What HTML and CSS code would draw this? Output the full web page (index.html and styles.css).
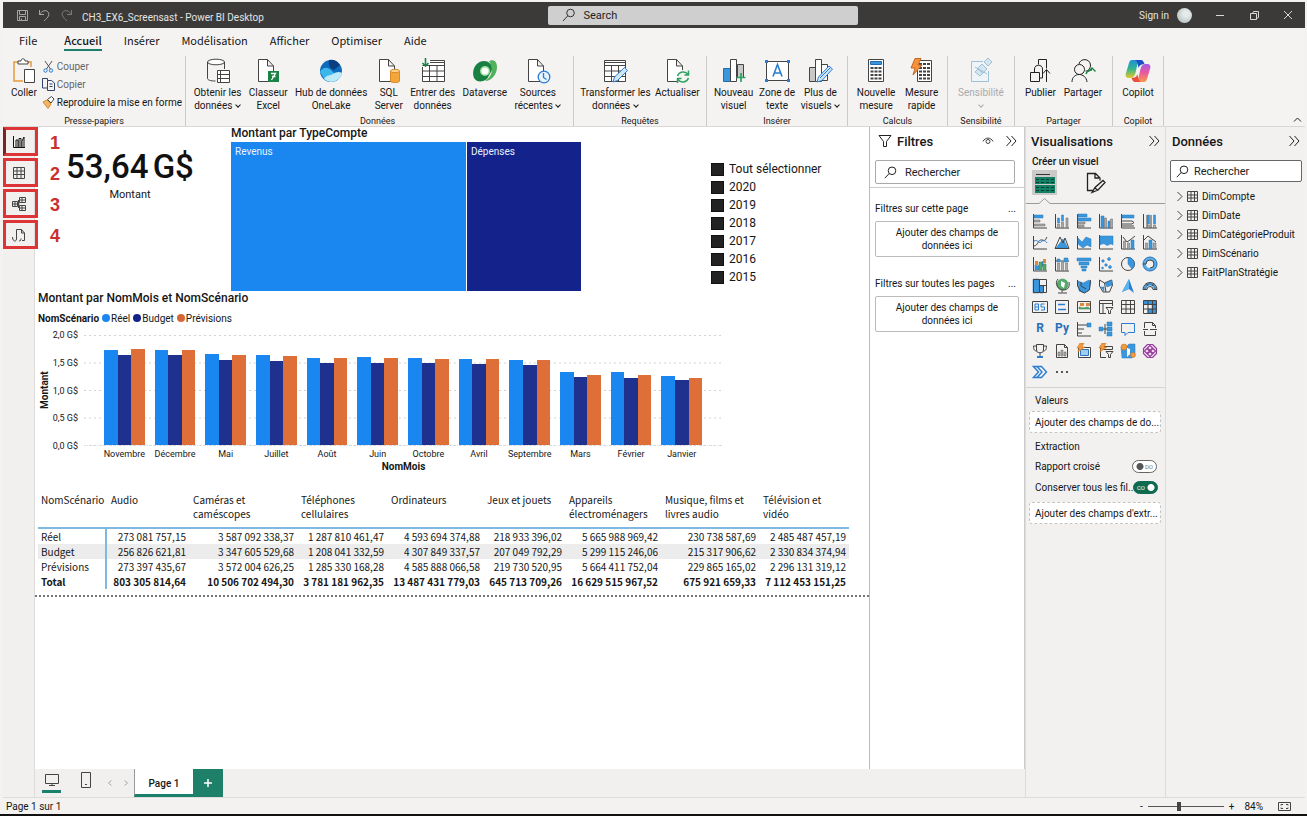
FILE: index.html
```html
<!DOCTYPE html>
<html lang="fr">
<head>
<meta charset="utf-8">
<title>CH3_EX6_Screensast - Power BI Desktop</title>
<link rel="stylesheet" href="styles.css">
</head>
<body>
<div class="app">
<header class="titlebar">
  <div class="title-left">
    <button class="bare" aria-label="Enregistrer"><svg class="ic tl" width="13" height="13" viewBox="0 0 13 13"><path d="M1.500 1.500h10v10h-10zM3.500 1.500v4h6v-4M3.500 11.500v-4h6v4M5.500 9.500v2"/></svg></button>
    <button class="bare" aria-label="Annuler"><svg class="ic tl" width="13" height="13" viewBox="0 0 13 13"><path d="M1.500 1v4.500h4.500M1.500 5.500C4 1.500 8 .5 10 3s.5 5-4 9"/></svg></button>
    <button class="bare redo" aria-label="Rétablir"><svg class="ic tl" width="13" height="13" viewBox="0 0 13 13"><path d="M11.500 1v4.500H7M11.500 5.500C9 1.500 5 .5 3 3s-.5 5 4 9"/></svg></button>
    <span class="doc-name">CH3_EX6_Screensast - Power BI Desktop</span>
  </div>
  <label class="top-search"><svg class="ic dk" width="14" height="14" viewBox="0 0 14 14"><circle cx="8.500" cy="5" r="3.800"/><path d="M5.800 7.800L1 13"/></svg><input type="text" placeholder="Search" aria-label="Search"></label>
  <div class="title-right">
    <button class="bare signin">Sign in</button><span class="avatar"></span>
    <button class="bare win" aria-label="Réduire"><svg class="ic wh" width="12" height="12" viewBox="0 0 12 12"><path d="M2 6.500h8"/></svg></button>
    <button class="bare win" aria-label="Restaurer"><svg class="ic wh" width="12" height="12" viewBox="0 0 12 12"><path d="M2.500 4.500h6v6h-6zM4.500 4.500l1-2h5v6l-2 1"/></svg></button>
    <button class="bare win" aria-label="Fermer"><svg class="ic wh" width="12" height="12" viewBox="0 0 12 12"><path d="M2 2l8 8M10 2l-8 8"/></svg></button>
  </div>
</header>

<nav class="menu">
  <button>File</button><button class="on">Accueil</button><button>Insérer</button><button>Modélisation</button><button>Afficher</button><button>Optimiser</button><button>Aide</button>
</nav>

<section class="ribbon">
  <div class="group g-clip">
    <div class="tools">
      <button class="tool"><svg class="ic" width="24" height="26" viewBox="0 0 24 26"><path stroke="#e39a3b" stroke-width="1.500" d="M8 4H2v19h9M15 4h4v5"/><path fill="#fff" d="M6 6V3h3c0-3 4-3 4 0h3v3z"/><path fill="#fff" d="M12.500 11.500h10v13h-10z"/></svg><span>Coller</span></button>
      <div class="clip-list">
        <button class="mini dim"><svg class="ic" width="13" height="13" viewBox="0 0 13 13"><path stroke="#555" d="M3 1l5.500 8M10 1L4.500 9"/><circle cx="3.500" cy="10.500" r="1.700" stroke="#2b7cd3"/><circle cx="9" cy="10.500" r="1.700" stroke="#2b7cd3"/></svg>Couper</button>
        <button class="mini dim"><svg class="ic" width="13" height="13" viewBox="0 0 13 13"><path stroke="#30436b" d="M5 10H.5V.5h5v2M5.500 2.500h4l3 2.500v7.500h-7z"/><path stroke="#30436b" d="M7.500 6h3M7.500 8.500h3"/></svg>Copier</button>
        <button class="mini"><svg class="ic" width="13" height="13" viewBox="0 0 13 13"><path fill="#f0b566" stroke="#d98a2b" d="M1 6l4-2 4 4-3 4.500z"/><path fill="#fff" d="M5.500 3.500l4-3 2.500 2.500-3 4z"/></svg>Reproduire la mise en forme</button>
      </div>
    </div>
    <div class="group-name">Presse-papiers</div>
  </div>

  <div class="group g-data">
    <div class="tools">
      <button class="tool"><svg class="ic" width="24" height="26" viewBox="0 0 24 26"><ellipse cx="10" cy="4" rx="8.500" ry="2.800" fill="#fff"/><path d="M1.500 4v16.500c0 1.500 3 2.500 8 2.500M18.500 4v7"/><path fill="#fff" d="M11.500 12.500h12v12h-12zM11.500 16.500h12M11.500 20.500h12M14.500 12.500v12"/></svg><span>Obtenir les<br>données <i class="car"></i></span></button>
      <button class="tool"><svg class="ic" width="24" height="26" viewBox="0 0 24 26"><path fill="#fff" d="M2.500 1.500h9l6 6.500v15.500h-15zM11.500 1.500V8h6"/><path fill="#1d8245" stroke="none" d="M12 13h11v11H12z"/><path stroke="#fff" stroke-width="1.300" d="M15 15.500h4.500l-4 6.500M16 18.500h3.500"/></svg><span>Classeur<br>Excel</span></button>
      <button class="tool"><svg width="24" height="26" viewBox="0 0 24 26"><circle cx="12" cy="13" r="11" fill="#0f6cbd"/><path fill="#0a3f82" d="M10 2a11 11 0 0 1 11 5l-6 5C11 11 9 7 10 2z"/><path fill="#3db6ea" d="M1 14c3-6 9-5 12-1s8 3 10 1a11 11 0 0 1-17 8z"/><path fill="#bdeaf8" d="M5 21c3-5 6-3 9-5s6-3 9-1a11 11 0 0 1-18 6z"/></svg><span>Hub de données<br>OneLake</span></button>
      <button class="tool"><svg class="ic" width="24" height="26" viewBox="0 0 24 26"><path fill="#fff" d="M2.500 1.500h9l6 6.500v15.500h-15zM11.500 1.500V8h6"/><path fill="#f3a73b" stroke="#d98a2b" d="M13.500 13v10c0 2 9 2 9 0V13z"/><ellipse cx="18" cy="13" rx="4.500" ry="1.700" fill="#ffd48c" stroke="#d98a2b"/></svg><span>SQL<br>Server</span></button>
      <button class="tool"><svg class="ic" width="26" height="26" viewBox="0 0 26 26"><path fill="#fff" d="M10 2.500h14.500v21h-22V9"/><path d="M2.500 7.500h22M2.500 13h22M2.500 18.500h22M9.500 7.500v16M17 7.500v16M10 4.500h14"/><path stroke="#1d8245" stroke-width="1.600" d="M5.500 0v8M2.500 5l3 3 3-3"/></svg><span>Entrer des<br>données</span></button>
      <button class="tool"><svg width="26" height="26" viewBox="0 0 26 26"><path fill="#1a7f42" d="M2 20C-1 12 4 3 12 3c5 0 9 4 8 9l-5 9c-4 3-10 4-13-1z"/><path fill="#52b15b" d="M17 3c5-2 8 1 8 6 0 8-6 14-12 14 7-4 9-12 4-20z"/><circle cx="13" cy="13" r="5" fill="#9be09a"/><circle cx="13" cy="13" r="3.500" fill="#fff"/></svg><span>Dataverse</span></button>
      <button class="tool"><svg class="ic" width="26" height="26" viewBox="0 0 26 26"><path fill="#fff" d="M3.500 1.500h9l6 6.500v15.500h-15zM12.500 1.500V8h6"/><circle cx="19" cy="19" r="5.800" fill="#e9f4fd" stroke="#2b7cd3" stroke-width="1.300"/><path stroke="#2b7cd3" stroke-width="1.300" d="M18.500 15v4.500l3 2"/></svg><span>Sources<br>récentes <i class="car"></i></span></button>
    </div>
    <div class="group-name">Données</div>
  </div>

  <div class="group g-query">
    <div class="tools">
      <button class="tool"><svg class="ic" width="26" height="26" viewBox="0 0 26 26"><path fill="#fff" d="M2.500 2.500h21v21h-21z"/><path d="M2.500 7.500h21M2.500 13h21M2.500 18.500h21M9.500 7.500v16M16.500 7.500v16M2.500 4.500h21"/><path fill="#cfe6f8" stroke="#2b7cd3" d="M11 24l1.500-5L22.500 9.500l3 3L15.500 22.500z"/></svg><span>Transformer les<br>données <i class="car"></i></span></button>
      <button class="tool"><svg class="ic" width="26" height="26" viewBox="0 0 26 26"><path fill="#fff" d="M13 23.500H3.500v-22h9l6 6.500v4M12.500 1.500V8h6"/><g stroke="#2da160" stroke-width="1.500"><path d="M13.500 18a6 6 0 0 1 10.500-1.500M24.500 12.500v4.500h-4M24.500 20a6 6 0 0 1-10.500 1.500M13.500 25v-4.500h4"/></g></svg><span>Actualiser</span></button>
    </div>
    <div class="group-name">Requêtes</div>
  </div>

  <div class="group g-insert">
    <div class="tools">
      <button class="tool"><svg class="ic" width="26" height="26" viewBox="0 0 26 26"><path fill="#3a96dd" stroke="#1f6cb0" d="M2.500 10.500h7v13h-7z"/><path fill="#fff" d="M9.500 1.500h6v22h-6z"/><path fill="#c8c8c8" d="M16.500 6.500h6v13h-6z"/><path stroke="#2da160" stroke-width="1.700" d="M20 15v9M15.500 19.500h9"/></svg><span>Nouveau<br>visuel</span></button>
      <button class="tool"><svg class="ic" width="26" height="26" viewBox="0 0 26 26"><path fill="#fff" d="M2.500 3.500h22v19h-22z"/><path stroke="#2b7cd3" stroke-width="1.600" d="M9 18.500l4.500-12 4.500 12M10.500 15h6"/><path fill="#2b7cd3" stroke="none" d="M1 2h3v3H1zM23 2h3v3h-3zM1 21h3v3H1zM23 21h3v3h-3z"/></svg><span>Zone de<br>texte</span></button>
      <button class="tool"><svg class="ic" width="26" height="26" viewBox="0 0 26 26"><path fill="#c8c8c8" d="M2.500 9.500h6v14h-6z"/><path fill="#fff" d="M8.500 1.500h6v22h-6zM14.500 6.500h6v16h-6z"/><path fill="#cfe6f8" stroke="#2b7cd3" d="M10 24l1.500-5L22 8l3.500 3L15 22.500zM13 20l10-10"/></svg><span>Plus de<br>visuels <i class="car"></i></span></button>
    </div>
    <div class="group-name">Insérer</div>
  </div>

  <div class="group g-calc">
    <div class="tools">
      <button class="tool"><svg class="ic" width="20" height="26" viewBox="0 0 20 26"><path fill="#fff" d="M2.500 1.500h15v22h-15z"/><path fill="#3a96dd" stroke="#1f6cb0" d="M4.500 3.500h11v3h-11z"/><path stroke-width="2" stroke-dasharray="3 1" d="M4.500 10h11M4.500 13.500h11M4.500 17h11M4.500 20.500h11"/></svg><span>Nouvelle<br>mesure</span></button>
      <button class="tool"><svg class="ic" width="24" height="26" viewBox="0 0 24 26"><path fill="#fff" d="M7.500 2.500h14v21h-14z"/><path stroke-width="2" stroke-dasharray="3 1" d="M9 6h11M9 10h11M9 13.500h11M9 17h11M9 20.500h11"/><path fill="#f5923e" stroke="#c9651b" d="M5 .5h6L8 7h4L3 17l2-7H1z"/></svg><span>Mesure<br>rapide</span></button>
    </div>
    <div class="group-name">Calculs</div>
  </div>

  <div class="group g-sens">
    <div class="tools">
      <button class="tool off" disabled><svg class="ic" width="24" height="26" viewBox="0 0 24 26"><g stroke="#9fc0d6"><path fill="#eef4f8" d="M14 3.500H2.500v20h17V13"/><path fill="#d4e5f0" d="M6 14l3-3 5 4-3 3zM9 10l4-4 5 5-4 4zM15 4l4-4 4 4-4 4z"/><path d="M6 9l12 7"/></g></svg><span>Sensibilité<br><i class="car"></i></span></button>
    </div>
    <div class="group-name">Sensibilité</div>
  </div>

  <div class="group g-share">
    <div class="tools">
      <button class="tool"><svg class="ic bk" width="24" height="26" viewBox="0 0 24 26"><path d="M2.500 14.500h9v9h-9zM6.500 14v-3c0-5 8-5 8 0v9h-3M10.500 6.500v-5h8v9M18.500 24v-12M15 15.500l3.500-4 3.500 4"/></svg><span>Publier</span></button>
      <button class="tool"><svg class="ic bk" width="26" height="26" viewBox="0 0 26 26"><circle cx="9.500" cy="11.500" r="5"/><path d="M2 24c0-10 14-10 15 0M9 6c1-6 11-6 11.500 1 0 3-2 6-5 6"/><path stroke="#1d8245" stroke-width="1.400" d="M16 16c1-3 3-4 6-4M18.500 13.500l3.500-3.500 3.500 3.500"/></svg><span>Partager</span></button>
    </div>
    <div class="group-name">Partager</div>
  </div>

  <div class="group g-cop">
    <div class="tools">
      <button class="tool"><svg width="26" height="26" viewBox="0 0 26 26"><defs><linearGradient id="ca" x1="0" y1="0" x2="0" y2="1"><stop offset="0" stop-color="#1e90dc"/><stop offset=".5" stop-color="#35b68b"/><stop offset="1" stop-color="#e8c62c"/></linearGradient><linearGradient id="cb" x1="0" y1="0" x2="0" y2="1"><stop offset="0" stop-color="#a65be6"/><stop offset=".5" stop-color="#ec5a9c"/><stop offset="1" stop-color="#f59a4a"/></linearGradient></defs><path fill="url(#ca)" d="M7 2h9c-3 1-4 6-5 11-1 4-2 7-5 7H4c-3 0-4-2-3-5L4 5c.6-2 1.400-3 3-3z"/><path fill="url(#cb)" d="M19 24h-9c3-1 4-6 5-11 1-4 2-7 5-7h2c3 0 4 2 3 5l-3 10c-.6 2-1.400 3-3 3z"/><path fill="#1d4fc4" d="M10 2h6c2 0 2.500 2 3.500 4-3 0-5 1-6 4C13 7 13 4 10 2z"/><path fill="#e94f3c" d="M16 24h-6c-2 0-2.500-2-3.500-4 3 0 5-1 6-4 .5 3 .5 6 3.500 8z"/></svg><span>Copilot</span></button>
    </div>
    <div class="group-name">Copilot</div>
  </div>
  <button class="bare collapse" aria-label="Réduire le ruban"><svg class="ic bk" width="9" height="7" viewBox="0 0 9 7"><path d="M1 5.500L4.500 2 8 5.500"/></svg></button>
</section>

<div class="body">
  <aside class="rail">
    <button class="current" aria-label="Vue rapport"><svg class="ic" width="14" height="14" viewBox="0 0 14 14"><path d="M1.500 1v11.500H13M4 12V5h2v7M7 12V3.500h2V12M10 12V6l2-4v10"/></svg><b>1</b></button>
    <button aria-label="Vue table"><svg class="ic" width="14" height="14" viewBox="0 0 14 14"><path d="M1.500 1.500h11v11h-11zM1.500 5h11M1.500 8.500h11M5 1.500v11M9 1.500v11"/></svg><b>2</b></button>
    <button aria-label="Vue modèle"><svg class="ic" width="16" height="14" viewBox="0 0 16 14"><path d="M1.500 4.500h5v5h-5zM1.500 7h5M4 4.500v5M8.500 .5h6v5h-6zM8.500 8.500h6v5h-6zM8.500 3h6M8.500 11h6M11 .5v5M11 8.500v5M6.500 7h2M7.500 3v8"/></svg><b>3</b></button>
    <button aria-label="Vue requête DAX"><svg class="ic" width="16" height="14" viewBox="0 0 16 14"><path d="M5.500 9V1.500h5L13.500 5v7.500H11M10.500 1.500V5h3M1.500 9c0 5 4 5 4 2V9M8 12.500c1 1 2 0 2-2"/></svg><b>4</b></button>
  </aside>

  <div class="work">
    <div class="upper">
    <main class="canvas">
      <div class="page">
        <div class="row-top">
          <div class="card"><div class="card-value">53,64&thinsp;G$</div><div class="card-label">Montant</div></div>
          <div class="tree">
            <h2>Montant par TypeCompte</h2>
            <div class="tree-map"><div class="t-rev">Revenus</div><div class="t-dep">Dépenses</div></div>
          </div>
          <div class="slicer">
            <label><input type="checkbox">Tout sélectionner</label>
            <label><input type="checkbox">2020</label>
            <label><input type="checkbox">2019</label>
            <label><input type="checkbox">2018</label>
            <label><input type="checkbox">2017</label>
            <label><input type="checkbox">2016</label>
            <label><input type="checkbox">2015</label>
          </div>
        </div>
        <section class="chart">
          <h2>Montant par NomMois et NomScénario</h2>
          <div class="legend"><b>NomScénario</b><span class="l1">Réel</span><span class="l2">Budget</span><span class="l3">Prévisions</span></div>
          <div class="plot">
            <div class="y-name">Montant</div>
            <div class="y-axis"><span>2,0 G$</span><span>1,5 G$</span><span>1,0 G$</span><span>0,5 G$</span><span>0,0 G$</span></div>
            <div class="bars">
              <div class="m"><i style="height:86%"></i><i style="height:82%"></i><i style="height:87%"></i><span>Novembre</span></div>
              <div class="m"><i style="height:86%"></i><i style="height:82%"></i><i style="height:86%"></i><span>Décembre</span></div>
              <div class="m"><i style="height:83%"></i><i style="height:77%"></i><i style="height:82%"></i><span>Mai</span></div>
              <div class="m"><i style="height:82%"></i><i style="height:76%"></i><i style="height:81%"></i><span>Juillet</span></div>
              <div class="m"><i style="height:79%"></i><i style="height:75%"></i><i style="height:79%"></i><span>Août</span></div>
              <div class="m"><i style="height:80%"></i><i style="height:75%"></i><i style="height:79%"></i><span>Juin</span></div>
              <div class="m"><i style="height:79%"></i><i style="height:75%"></i><i style="height:78%"></i><span>Octobre</span></div>
              <div class="m"><i style="height:78%"></i><i style="height:74%"></i><i style="height:78%"></i><span>Avril</span></div>
              <div class="m"><i style="height:77%"></i><i style="height:73%"></i><i style="height:77%"></i><span>Septembre</span></div>
              <div class="m"><i style="height:66%"></i><i style="height:62%"></i><i style="height:64%"></i><span>Mars</span></div>
              <div class="m"><i style="height:66%"></i><i style="height:61%"></i><i style="height:64%"></i><span>Février</span></div>
              <div class="m"><i style="height:63%"></i><i style="height:59%"></i><i style="height:61%"></i><span>Janvier</span></div>
            </div>
          </div>
          <div class="x-name">NomMois</div>
        </section>
        <table class="matrix">
          <colgroup><col class="c0"><col class="c1"><col class="c2"><col class="c3"><col class="c4"><col class="c1"><col class="c4"><col class="c5"><col class="c3"></colgroup>
          <thead><tr><th>NomScénario</th><th>Audio</th><th>Caméras et<br>caméscopes</th><th>Téléphones<br>cellulaires</th><th>Ordinateurs</th><th>Jeux et jouets</th><th>Appareils<br>électroménagers</th><th>Musique, films et<br>livres audio</th><th>Télévision et<br>vidéo</th></tr></thead>
          <tbody>
            <tr><th>Réel</th><td>273 081 757,15</td><td>3 587 092 338,37</td><td>1 287 810 461,47</td><td>4 593 694 374,88</td><td>218 933 396,02</td><td>5 665 988 969,42</td><td>230 738 587,69</td><td>2 485 487 457,19</td></tr>
            <tr class="alt"><th>Budget</th><td>256 826 621,81</td><td>3 347 605 529,68</td><td>1 208 041 332,59</td><td>4 307 849 337,57</td><td>207 049 792,29</td><td>5 299 115 246,06</td><td>215 317 906,62</td><td>2 330 834 374,94</td></tr>
            <tr><th>Prévisions</th><td>273 397 435,67</td><td>3 572 004 626,25</td><td>1 285 330 168,28</td><td>4 585 888 066,58</td><td>219 730 520,95</td><td>5 664 411 752,04</td><td>229 865 165,02</td><td>2 296 131 319,12</td></tr>
            <tr class="total"><th>Total</th><td>803 305 814,64</td><td>10 506 702 494,30</td><td>3 781 181 962,35</td><td>13 487 431 779,03</td><td>645 713 709,26</td><td>16 629 515 967,52</td><td>675 921 659,33</td><td>7 112 453 151,25</td></tr>
          </tbody>
        </table>
      </div>
    </main>

    <aside class="filters">
      <div class="pane-head"><svg class="ic bk" width="14" height="14" viewBox="0 0 14 14"><path d="M1 1.500h12L8.500 7.500v5h-3v-5z"/></svg><h3>Filtres</h3><button class="bare" aria-label="Afficher"><svg class="ic" width="12" height="12" viewBox="0 0 12 12"><path d="M1 6.500c2-4.500 8-4.500 10 0"/><circle cx="6" cy="6.500" r="2"/></svg></button><button class="bare" aria-label="Réduire Filtres"><svg class="ic bk" width="12" height="12" viewBox="0 0 12 12"><path d="M1.500 1L6 6l-4.500 5M6.500 1L11 6l-4.500 5"/></svg></button></div>
      <label class="search"><svg class="ic bk" width="13" height="13" viewBox="0 0 13 13"><circle cx="8" cy="4.800" r="3.800"/><path d="M5.200 7.500L.8 12.200"/></svg><input type="text" placeholder="Rechercher" aria-label="Rechercher"></label>
      <div class="filter-body">
        <div class="f-head"><span>Filtres sur cette page</span><button class="bare">...</button></div>
        <button class="drop">Ajouter des champs de<br>données ici</button>
        <div class="f-head"><span>Filtres sur toutes les pages</span><button class="bare">...</button></div>
        <button class="drop">Ajouter des champs de<br>données ici</button>
      </div>
    </aside>
    </div>

    <footer class="pages">
      <button class="bare view on" aria-label="Disposition bureau"><svg class="ic" width="16" height="14" viewBox="0 0 16 14"><path d="M1.500 1.500h13v9h-13zM8 10.500v2M5 12.500h6"/></svg></button>
      <button class="bare view ph" aria-label="Disposition mobile"><svg class="ic" width="12" height="18" viewBox="0 0 12 18"><path d="M1.500 1.500h9v15h-9zM5 13.500h2"/></svg></button>
      <button class="bare arrow" aria-label="Page précédente"><svg class="ic lt" width="6" height="8" viewBox="0 0 6 8"><path d="M4.500 1.500L1.500 4l3 2.500"/></svg></button>
      <button class="bare arrow" aria-label="Page suivante"><svg class="ic lt" width="6" height="8" viewBox="0 0 6 8"><path d="M1.500 1.500l3 2.500-3 2.500"/></svg></button>
      <button class="page-tab">Page 1</button><button class="add" aria-label="Nouvelle page"><svg class="ic" width="10" height="10" viewBox="0 0 10 10"><path stroke="#fff" stroke-width="1.500" d="M5 1v8M1 5h8"/></svg></button>
    </footer>
  </div>

  <aside class="visuals">
    <div class="pane-head"><h3>Visualisations</h3><button class="bare" aria-label="Réduire Visualisations"><svg class="ic bk" width="12" height="12" viewBox="0 0 12 12"><path d="M1.500 1L6 6l-4.500 5M6.500 1L11 6l-4.500 5"/></svg></button></div>
    <div class="sub">Créer un visuel</div>
    <div class="modes">
      <button class="mode on" aria-label="Créer"><svg width="20" height="20" viewBox="0 0 20 20"><path fill="#333" d="M1 1h14v1H1z"/><path fill="#148063" d="M0 4h20v7H0zM0 12h20v8H0z"/><path stroke="#0b3f33" stroke-dasharray="3 2" d="M1 6.500h18M1 9.500h18M1 14.500h18M1 17.500h18"/></svg></button>
      <button class="mode" aria-label="Mettre en forme"><svg class="ic bk" width="20" height="22" viewBox="0 0 20 22"><path stroke-width="1.300" d="M14 8.500V6l-4.500-4.500H1.500v17h6M9 1.500V6h4M6 20.500l3-5 8-7 2 2-7 7.500zM9 16l3 2.500"/></svg></button>
    </div>
    <svg class="ic notch" width="139" height="8" viewBox="0 0 139 8"><path stroke="#9a9a9a" d="M0 6.500h13l5.500-5 5.500 5h115"/></svg>
    <div class="gallery">
      <button aria-label="Barres empilées"><svg class="ic" viewBox="0 0 16 16"><path d="M1.500 1v14H15"/><path class="b" d="M2 2h9v3H2z"/><path class="g" d="M2 7h6v2H2zM2 11h11v2H2z"/></svg></button>
      <button aria-label="Histogramme empilé"><svg class="ic" viewBox="0 0 16 16"><path d="M1.500 1v14H15"/><path class="b" d="M3.500 5h2v5h-2zM7.500 2h2v6h-2z"/><path class="g" d="M3.500 11h2v4h-2zM7.500 9h2v6h-2zM12 5h2v10h-2z"/></svg></button>
      <button aria-label="Barres groupées"><svg class="ic" viewBox="0 0 16 16"><path d="M1.500 1v14H15"/><path class="b" d="M2 1h9v3H2zM2 5h13v3H2z"/><path class="g" d="M2 9h7v2H2zM2 12h6v2H2z"/></svg></button>
      <button aria-label="Histogramme groupé"><svg class="ic" viewBox="0 0 16 16"><path d="M1.500 1v14H15"/><path class="b" d="M3 3h3v12H3zM10 8h2v7h-2z"/><path class="g" d="M6.500 5h2v10h-2zM12.500 6h2v9h-2z"/></svg></button>
      <button aria-label="Barres 100 %"><svg class="ic" viewBox="0 0 16 16"><path d="M1.500 1v14H15"/><path class="b" d="M2 2h12v3H2z"/><path d="M2 8h10l2 1.500L12 11H2M2 13h12"/></svg></button>
      <button aria-label="Histogramme 100 %"><svg class="ic" viewBox="0 0 16 16"><path d="M1.500 1v14H15M5 2v13M9 2v13"/><path class="b" d="M5.500 2h2v9h-2zM11.500 2h2v9h-2z"/><path class="g" d="M5.500 12h2v3h-2zM11.500 12h2v3h-2z"/></svg></button>

      <button aria-label="Courbes"><svg class="ic" viewBox="0 0 16 16"><path d="M1.500 2v13H15M2 12c4 0 4-7 8-6s3 0 5-3"/><path class="bl" d="M2 7c4-2 5 3 7 1s4-2 6 1"/></svg></button>
      <button aria-label="Aires"><svg class="ic" viewBox="0 0 16 16"><path class="b" d="M2 14l7-9 5 9z"/><path d="M1 14.500L6 3l3 6 2-5 4 10.500z"/></svg></button>
      <button aria-label="Aires empilées"><svg class="ic" viewBox="0 0 16 16"><path d="M1.500 2v13H15"/><path class="b" d="M2 4l4 4 4-5 5 2v8l-4-2-4 3-5-4z"/></svg></button>
      <button aria-label="Aires 100 %"><svg class="ic" viewBox="0 0 16 16"><path d="M1.500 1v14H15"/><path class="b" d="M2 2h13v9c-3-3-5 2-7 0s-4-1-6 0z"/></svg></button>
      <button aria-label="Courbe et histogramme empilé"><svg class="ic" viewBox="0 0 16 16"><path d="M1.500 1v14H15M3 3l4 5 3-2 5-4"/><path class="g" d="M3.500 7h2v8h-2zM7.500 9h2v6h-2z"/><path class="b" d="M11 6h3v9h-3z"/></svg></button>
      <button aria-label="Courbe et histogramme groupé"><svg class="ic" viewBox="0 0 16 16"><path d="M1.500 1v14H15M2 6l4-4 4 3 4 3"/><path class="g" d="M3.500 9h2v6h-2zM11 9h3v6h-3z"/><path class="b" d="M7 6h3v9H7z"/></svg></button>

      <button aria-label="Ruban"><svg class="ic" viewBox="0 0 16 16"><path d="M1.500 1v14H15"/><path fill="#e2883d" stroke="none" d="M3 5h3v4H3zM11 3h3v4h-3z"/><path class="b" d="M3 9l3 1 5-5v5l-5 4H3z"/><path class="gr" d="M7 6h3v8H7zM11 8h3v6h-3z"/></svg></button>
      <button aria-label="Cascade"><svg class="ic" viewBox="0 0 16 16"><path d="M1.500 1v14H15M2 5h13"/><path class="b" d="M3 3h3v3H3zM10 2h4v4h-4z"/><path class="g" d="M3.500 7h2v8h-2zM7.500 6h2v9h-2zM11.500 7h2v8h-2z"/></svg></button>
      <button aria-label="Entonnoir"><svg class="ic" viewBox="0 0 16 16"><path class="b" d="M1 2h14v3H1zM3 6h10v3H3zM5 10h6v2H5zM6 13h4v2H6z"/></svg></button>
      <button aria-label="Nuage de points"><svg class="ic" viewBox="0 0 16 16"><path d="M1.500 1v14H15"/><g class="b"><circle cx="5" cy="5" r="1.300"/><circle cx="11" cy="3" r="1.500"/><circle cx="8" cy="9" r="1.300"/><circle cx="12" cy="11" r="1.500"/><circle cx="4.500" cy="12" r="1"/></g></svg></button>
      <button aria-label="Secteurs"><svg class="ic" viewBox="0 0 16 16"><circle cx="8" cy="8" r="6.500"/><path class="b" d="M8 1.500A6.500 6.500 0 0 1 12 13L8 8z"/></svg></button>
      <button aria-label="Anneau"><svg class="ic" viewBox="0 0 16 16"><circle cx="8" cy="8" r="5.500" stroke="#58aeea" stroke-width="3"/><circle cx="8" cy="8" r="7" stroke="#2b6fb8"/><path d="M1 8h3a4 4 0 0 1 8 0 4 4 0 0 1-4 4"/></svg></button>

      <button aria-label="Treemap"><svg class="ic" viewBox="0 0 16 16"><path class="b" d="M1 1h6v14H1zM8 8h3v7H8z"/><path d="M1.500 1.500h13v13h-13zM7.500 1.500v13M7.500 7.500h7M11.500 7.500v7"/></svg></button>
      <button aria-label="Carte"><svg class="ic" viewBox="0 0 16 16"><circle cx="8.500" cy="6.500" r="5.500" class="gr"/><path fill="#fff" stroke="none" d="M7 3l4 2-1 5-3-2z"/><path d="M4 1c-4 4 0 11 5 11s7-3 6-8M8 12.500v2M4 15h9"/></svg></button>
      <button aria-label="Carte choroplèthe"><svg class="ic" viewBox="0 0 16 16"><path class="b" d="M2 3l5 2 6-3 2 2-2 8-5 3-5-2z"/><path d="M1.500 2v6l3 5 4 2 5-3 1-10M5 4v4l5 3"/></svg></button>
      <button aria-label="Carte de formes"><svg class="ic" viewBox="0 0 16 16"><path d="M1.500 2l5 3 7-3 1 5-3 7H5L1.500 8zM6.500 5L8 14"/><path class="b" d="M7 5l7-3v5l-5 2zM3 9h3v4z"/></svg></button>
      <button aria-label="Azure Maps"><svg class="ic" viewBox="0 0 16 16"><path fill="#2b7cd3" stroke="none" d="M9 1l5 14-5-4-7 3z"/><path fill="#58b4ed" stroke="none" d="M9 1v10l-7 3z"/></svg></button>
      <button aria-label="Jauge"><svg class="ic" viewBox="0 0 16 16"><path class="b" d="M2 11a6 6 0 0 1 12 0h-2a4 4 0 0 0-8 0z"/><path d="M1 11.500a7 7 0 0 1 14 0h-4a3 3 0 0 0-6 0zM4 5l2 3M12 5l-2 3"/></svg></button>

      <button aria-label="Carte de valeur"><svg class="ic" viewBox="0 0 16 16"><path d="M.5 2.500h15v11H.5z"/><path class="bl" d="M3 5v6h3.500V5H3M3 8h3.500M12.500 5H9v3h3.500v3H9"/></svg></button>
      <button aria-label="Carte multiligne"><svg class="ic" viewBox="0 0 16 16"><path d="M1.500 1.500h13v13h-13z"/><path class="bl" stroke-width="1.600" d="M4 5.500h7M4 10.500h8"/></svg></button>
      <button aria-label="KPI"><svg class="ic" viewBox="0 0 16 16"><path d="M1.500 2.500h13v11h-13z"/><path fill="#e2883d" stroke="none" d="M4 4h4v3H4zM10 4h4v3h-4z"/><path class="gr" d="M3 8l4 1 5-1 2 2H3z"/></svg></button>
      <button aria-label="Segment"><svg class="ic" viewBox="0 0 16 16"><path d="M8 14.500H1.500v-13h13V7M1.500 4.500h13M5 4.500v10M8 8.500h7l-2.500 3v3h-2v-3z"/></svg></button>
      <button aria-label="Table"><svg class="ic" viewBox="0 0 16 16"><path d="M1.500 1.500h13v13h-13zM1.500 5.500h13M1.500 10h13M6 1.500v13M10.500 1.500v13"/></svg></button>
      <button aria-label="Matrice"><svg class="ic" viewBox="0 0 16 16"><path class="b" d="M6 10h4v4H6zM10 6h4v8h-4zM2 2h12v3H2z"/><path d="M1.500 1.500h13v13h-13zM1.500 5.500h13M1.500 10h13M6 1.500v13M10.500 1.500v13"/></svg></button>

      <button class="letters">R</button>
      <button class="letters">Py</button>
      <button aria-label="Influenceurs clés"><svg class="ic" viewBox="0 0 16 16"><path d="M1.500 1v14H15M2 4h9M2 8h6M2 12h4"/><path class="b" d="M11 2h4v4h-4z"/></svg></button>
      <button aria-label="Arborescence hiérarchique"><svg class="ic" viewBox="0 0 16 16"><path class="b" d="M1 6h4v4H1zM9 1h5v4H9zM9 6h5v4H9zM9 11h5v4H9z"/><path d="M5 8h4M7 3v10"/></svg></button>
      <button aria-label="Questions et réponses"><svg class="ic" viewBox="0 0 16 16"><path class="bl" d="M1.500 2.500h13v9H8l-3 3v-3H1.500z"/></svg></button>
      <button aria-label="Récit"><svg class="ic" viewBox="0 0 16 16"><path d="M2.500 7V1.500h8l3 3V7M2.500 10v4.500h11V10M10.500 1.500v3h3M1 8.500h5M8 8.500h7"/></svg></button>

      <button aria-label="Métriques"><svg class="ic" viewBox="0 0 16 16"><path d="M4.500 1.500h7v6c0 3-7 3-7 0zM4.500 3h-3c0 4 1 5 4 5M11.500 3h3c0 4-1 5-4 5M8 10v3"/><path class="bl" stroke-width="2" d="M5 14h6"/></svg></button>
      <button aria-label="Rapport paginé"><svg class="ic" viewBox="0 0 16 16"><path d="M2.500 1.500h8l3 3v10h-11zM10.500 1.500v3h3"/><path class="g" d="M4 9h2v4H4zM7 7h2v6H7zM10 9h2v4h-2z"/></svg></button>
      <button aria-label="Carte nouvelle"><svg class="ic" viewBox="0 0 16 16"><path fill="#fff" d="M2.500 4.500h12v10h-12z"/><path fill="#9fcdf0" stroke="#2b78bd" d="M4.500 6.500h8v6h-8z"/><path class="o" d="M4 0h4L6 4h3L2 9l1-4H1z"/></svg></button>
      <button aria-label="Segment nouveau"><svg class="ic" viewBox="0 0 16 16"><path d="M2.500 3.500h12v3h-12zM2.500 6.500v8H8M8 8.500h7l-2.500 3v3h-2v-3z"/><path class="o" d="M4 0h4L6 4h3L2 9l1-4H1z"/></svg></button>
      <button aria-label="ArcGIS"><svg class="ic" viewBox="0 0 16 16"><path class="b" d="M1 4h5l3-3h6v9l-3 5H2z"/><path fill="#fff" stroke="none" d="M7 5l3 1v5l-3 3z"/><circle class="o" cx="4" cy="4" r="3"/><circle class="o" cx="13" cy="12" r="2.500"/></svg></button>
      <button aria-label="Power Apps"><svg class="ic" viewBox="0 0 16 16"><g fill="#f4e6f5" stroke="#96409c" stroke-width="1.200" stroke-linejoin="round"><path d="M5.500 1.500h5L14.500 5.500v5l-4 4h-5l-4-4v-5z"/><path d="M8 2.500l2.500 2.500L8 7.500 5.500 5zM8 8.500l2.500 2.500L8 13.500 5.500 11zM5 5.500L7.500 8 5 10.500 2.500 8zM11 5.500L13.500 8 11 10.500 8.500 8z"/></g></svg></button>

      <button aria-label="Power Automate"><svg class="ic" viewBox="0 0 16 16"><path class="bl" stroke-width="1.400" d="M1.500 2.500h8L14.500 8l-5 5.500h-8l5-5.500zM5 2.500L10 8l-5 5.500"/></svg></button>
      <button aria-label="Plus de visuels"><svg class="ic" viewBox="0 0 16 16"><g fill="#222" stroke="none"><circle cx="3" cy="8" r="1"/><circle cx="8" cy="8" r="1"/><circle cx="13" cy="8" r="1"/></g></svg></button>
    </div>
    <div class="wells">
      <div class="w-label">Valeurs</div>
      <button class="well">Ajouter des champs de do...</button>
      <div class="w-label">Extraction</div>
      <div class="toggles">
        <label class="toggle"><span class="t-name">Rapport croisé</span><input type="checkbox"><span class="t-state">DO</span></label>
        <label class="toggle"><span class="t-name">Conserver tous les fil..</span><input type="checkbox" checked><span class="t-state">CO</span></label>
      </div>
      <button class="well">Ajouter des champs d'extr...</button>
    </div>
  </aside>

  <aside class="data">
    <div class="pane-head"><h3>Données</h3><button class="bare" aria-label="Réduire Données"><svg class="ic bk" width="12" height="12" viewBox="0 0 12 12"><path d="M1.500 1L6 6l-4.500 5M6.500 1L11 6l-4.500 5"/></svg></button></div>
    <label class="search"><svg class="ic bk" width="13" height="13" viewBox="0 0 13 13"><circle cx="8" cy="4.800" r="3.800"/><path d="M5.200 7.500L.8 12.200"/></svg><input type="text" placeholder="Rechercher" aria-label="Rechercher"></label>
    <ul class="tables">
      <li><svg class="ic" width="22" height="11" viewBox="0 0 22 11"><path d="M1.500 1L6 5.500 1.500 10M11.500.5h10v10h-10zM11.500 4h10M11.500 7h10M15 .5v10M18.500.5v10"/></svg>DimCompte</li>
      <li><svg class="ic" width="22" height="11" viewBox="0 0 22 11"><path d="M1.500 1L6 5.500 1.500 10M11.500.5h10v10h-10zM11.500 4h10M11.500 7h10M15 .5v10M18.500.5v10"/></svg>DimDate</li>
      <li><svg class="ic" width="22" height="11" viewBox="0 0 22 11"><path d="M1.500 1L6 5.500 1.500 10M11.500.5h10v10h-10zM11.500 4h10M11.500 7h10M15 .5v10M18.500.5v10"/></svg>DimCatégorieProduit</li>
      <li><svg class="ic" width="22" height="11" viewBox="0 0 22 11"><path d="M1.500 1L6 5.500 1.500 10M11.500.5h10v10h-10zM11.500 4h10M11.500 7h10M15 .5v10M18.500.5v10"/></svg>DimScénario</li>
      <li><svg class="ic" width="22" height="11" viewBox="0 0 22 11"><path d="M1.500 1L6 5.500 1.500 10M11.500.5h10v10h-10zM11.500 4h10M11.500 7h10M15 .5v10M18.500.5v10"/></svg>FaitPlanStratégie</li>
    </ul>
  </aside>
</div>

<div class="status">
  <span>Page 1 sur 1</span>
  <div class="zoom"><button class="bare">-</button><input type="range" min="0" max="100" value="40" aria-label="Zoom"><button class="bare">+</button><span>84%</span><button class="bare fit" aria-label="Ajuster à la page"><svg class="ic" width="13" height="11" viewBox="0 0 13 11"><path d="M.5 1.500h12v8H.5zM3 4.500V3.500h2M8 3.500h2v1M3 6.500v1h2M8 7.500h2v-1"/></svg></button></div>
</div>
</div>
</body>
</html>
```
FILE: styles.css
```css
* { box-sizing: border-box; }
body { margin: 0; background: #fff; color: #161616; font-family: Roboto, sans-serif; font-size: 10px; line-height: 13px; }
button, input { font: inherit; color: inherit; }
button { margin: 0; padding: 0; border: 0; background: none; display: inline-flex; align-items: center; justify-content: center; white-space: nowrap; }
h2, h3 { margin: 0; }
svg { display: block; flex: none; }
.ic { fill: none; stroke: #444; stroke-width: 1; }
.ic.bk { stroke: #222; }
.ic.dk { stroke: #333; }
.ic.tl { stroke: #a5a5a3; }
.redo { opacity: .6; }
.ic.wh { stroke: #d8d8d8; }
.ic.lt { stroke: #a8a8a8; }
.b { fill: #3a96dd; stroke: #2b78bd; stroke-width: .5; }
.bl { stroke: #2b7cd3; }
.g { fill: #a9a9a9; stroke: #666; stroke-width: .5; }
.gr { fill: #55ab6a; stroke: #2f7a45; stroke-width: .5; }
.o { fill: #f0993f; stroke: #c76f1c; stroke-width: .5; }

.app { display: flex; flex-direction: column; min-height: 100vh; padding: 2px 2px 0 3px; border-bottom: 2px solid #111; background: #f3f2f1; }

.titlebar { display: flex; align-items: center; height: 26px; background: #3b3a38; color: #e4e4e4; }
.title-left { flex: 55 1 0; display: flex; align-items: center; gap: 9px; padding-left: 13px; }
.doc-name { padding-top: 4px; }
.top-search { flex: 0 1 310px; height: 19px; display: flex; align-items: center; gap: 7px; padding-left: 14px; background: #cfcfcf; border-radius: 2px; color: #222; font-size: 11px; }
.top-search input { flex: 1; min-width: 0; border: 0; padding: 0; background: none; outline: 0; }
input::placeholder { color: #222; opacity: 1; }
.title-right { flex: 45 1 0; display: flex; align-items: center; justify-content: flex-end; padding-right: 11px; }
.avatar { width: 15px; height: 15px; margin: 0 22px 0 8px; border-radius: 50%; background: radial-gradient(circle at 60% 40%, #e6ebea 20%, #b4c0bf 80%); }
.win { margin-left: 22px; }
.avatar + .win { margin-left: 0; }

.menu { display: flex; gap: 22px; padding: 0 16px; height: 25px; background: #f4f3f2; font-family: "Noto Sans CJK SC", Roboto, sans-serif; font-size: 11px; }
.menu button { border-bottom: 2px solid transparent; height: 23px; padding-top: 3px; }
.menu .on { font-weight: 500; margin-left: 5px; border-color: #1a7f6b; }

.ribbon { display: flex; height: 74px; padding-top: 3px; background: #f4f3f2; border-bottom: 1px solid #d9d8d6; }
.group { flex: none; display: flex; flex-direction: column; justify-content: space-between; border-right: 1px solid #cbcac8; height: 70px; }
.g-clip { width: 183px; }
.g-data { width: 388px; padding: 0 8px 0 4px; }
.g-query { width: 133px; padding: 0 4px; }
.g-insert { width: 141px; padding: 0 4px; }
.g-calc { width: 100px; padding: 0 4px; }
.g-sens { width: 67px; }
.g-share { width: 98px; padding: 0 6px; }
.g-cop { width: 51px; }
.tools { display: flex; justify-content: space-around; align-items: flex-start; }
.g-clip .tools { justify-content: flex-start; padding-left: 8px; gap: 5px; }
.tool { flex-direction: column; padding-top: 2px; gap: 2px; }
.tool span { text-align: center; }
.off { color: #aaa; }
.car { display: inline-block; width: 4px; height: 4px; margin: 0 1px 2px 1px; border: solid currentColor; border-width: 0 1px 1px 0; rotate: 45deg; }
.clip-list { display: flex; flex-direction: column; align-items: flex-start; gap: 5px; padding-top: 4px; }
.mini { gap: 2px; }
.dim { color: #666; }
.group-name { font-size: 9px; line-height: 10px; text-align: center; }
.collapse { margin: auto 3px 3px auto; }

.body { flex: 1; display: flex; min-height: 0; }
.rail { flex: none; width: 32px; background: #f1f0ef; border-right: 1px solid #dddcda; display: flex; flex-direction: column; gap: 2px; }
.rail button { position: relative; z-index: 1; width: 35px; height: 29px; padding-right: 3px; border: 3px solid #dd3438; }
.rail .current { border-left-color: #7c2224; }
.rail .current svg { stroke: #111; }
.rail b { position: absolute; left: 44px; top: 3px; color: #c9302f; font: bold 18px/20px "Liberation Sans", sans-serif; }

.work { flex: 1; min-width: 0; display: flex; flex-direction: column; }
.upper { flex: 1; display: flex; }
.canvas { flex: 1; min-width: 0; background: #fff; }
.page { border-bottom: 2px dotted #777; padding-bottom: 6px; }
.page h2 { font-size: 12px; line-height: 14px; font-weight: 500; }
.row-top { display: flex; height: 164px; }
.card { width: 190px; margin-right: 6px; padding-top: 20px; text-align: center; }
.card-value { font-size: 33px; line-height: 40px; font-weight: 500; color: #111; }
.card-label { font-size: 11px; line-height: 16px; }
.tree { width: 350px; }
.page .tree h2 { line-height: 12px; margin-bottom: 3px; }
.tree-map { display: flex; gap: 1px; height: 149px; color: #e8f1fb; }
.t-rev { width: 235px; background: #1a86f0; padding: 3px 4px; }
.t-dep { flex: 1; background: #14228b; padding: 3px 4px; }
.slicer { margin-left: 130px; padding-top: 33px; font-size: 12px; }
.slicer label { display: flex; align-items: center; gap: 5px; height: 18px; }
.slicer input { appearance: none; margin: 0; width: 13px; height: 13px; background: #222; border: 1px solid #111; }

.chart { padding-left: 3px; height: 184px; }
.legend { display: flex; gap: 3px; margin-top: 7px; }
.legend b { font-weight: 700; }
.legend span::before { content: ""; display: inline-block; width: 8px; height: 8px; margin-right: 1px; border-radius: 50%; background: #1a86f0; }
.legend .l2::before { background: #14228b; }
.legend .l3::before { background: #d2683a; }
.plot { display: flex; height: 111px; margin-top: 10px; font-size: 9px; }
.y-name { width: 12px; writing-mode: vertical-rl; rotate: 180deg; text-align: center; font-weight: bold; font-size: 10px; }
.y-axis { width: 28px; margin: -6px 6px -6px 0; display: flex; flex-direction: column; justify-content: space-between; text-align: right; line-height: 12px; white-space: nowrap; }
.bars { width: 638px; padding: 0 15px; display: flex; background: repeating-linear-gradient(90deg, transparent 0 2px, #fff 2px 5px), linear-gradient(#d2d2d2 1px, transparent 1px) 0 0 / 100% 25%; border-bottom: 1px dotted #ddd; }
.m { flex: 1; display: flex; align-items: flex-end; padding: 0 5px; position: relative; }
.m i { flex: 1; background: #1a86f0; }
.m i:nth-child(2) { background: #1f318f; }
.m i:nth-child(3) { background: #df6f38; }
.m span { position: absolute; top: 100%; left: -5px; right: -5px; margin-top: 3px; text-align: center; }
.x-name { margin-top: 14px; padding-right: 100px; text-align: center; font-weight: bold; }

.matrix { width: 811px; margin: 18px 0 0 3px; border-collapse: separate; border-spacing: 0; table-layout: fixed; font-family: "Noto Sans CJK SC", Roboto, sans-serif; line-height: 14px; white-space: nowrap; }
.c0 { width: 69px; } .c1 { width: 82px; } .c2 { width: 108px; } .c3 { width: 90px; } .c4 { width: 96px; } .c5 { width: 98px; }
.matrix th { padding: 0 0 0 3px; text-align: left; font-weight: normal; }
.matrix thead th { height: 36px; padding-left: 4px; vertical-align: top; border-bottom: 2px solid #7fb9e2; }
.matrix thead th:first-child { padding-left: 3px; }
.matrix td { height: 15px; padding: 0 3px 0 0; text-align: right; }
.matrix tbody th { border-right: 2px solid #7fb9e2; }
.matrix .alt { background: #ececec; }
.matrix .total > * { font-weight: bold; }

.filters { flex: none; width: 156px; background: #fff; border-left: 1px solid #bbb; border-right: 1px solid #ccc; }
.pane-head { display: flex; align-items: center; gap: 5px; height: 28px; padding: 0 7px 0 8px; }
.pane-head h3 { flex: 1; font-size: 13px; font-weight: 500; }
.filters .pane-head button + button { margin-left: 6px; }
.search { display: flex; align-items: center; gap: 8px; height: 24px; margin: 5px 9px 3px 5px; padding-left: 8px; background: #fff; border: 1px solid #aaa; border-radius: 2px; font-size: 11px; }
.search input { flex: 1; min-width: 0; border: 0; padding: 0; background: none; outline: 0; }
.filter-body { border-top: 1px solid #ccc; padding: 14px 5px 0; }
.f-head { display: flex; justify-content: space-between; height: 13px; margin-bottom: 6px; }
.f-head button { margin-right: 3px; }
.drop { display: block; width: 100%; height: 36px; margin-bottom: 20px; border: 1px solid #bbb; border-radius: 2px; }

.pages { display: flex; align-items: stretch; height: 28px; padding-left: 7px; background: #f1f0ef; }
.view { width: 19px; height: 24px; padding-bottom: 2px; }
.view.on { border-bottom: 3px solid #1a7f6b; padding-bottom: 0; }
.ph { margin: 0 7px 0 15px; }
.arrow { width: 16px; }
.page-tab { width: 59px; background: #fff; border-left: 1px solid #999; border-bottom: 3px solid #1a7f6b; font-weight: 500; padding-top: 3px; }
.add { width: 30px; background: #1f8069; }

.visuals { flex: none; width: 141px; background: #f2f1f0; border-right: 1px solid #dddcda; border-left: 1px solid #dddcda; }
.visuals .pane-head { padding: 0 5px; }
.sub { padding-left: 6px; font-weight: 500; }
.modes { display: flex; gap: 26px; padding: 2px 6px; }
.mode { width: 25px; height: 25px; }
.mode.on { background: #cbcac8; }
.gallery { display: grid; grid-template-columns: repeat(6, 1fr); grid-auto-rows: 1fr; height: 173px; margin: 5px 4px 4px 3px; }
.gallery button { min-height: 0; }
.gallery svg { width: 16px; height: 16px; }
.letters { color: #2b6fb8; font-size: 12px; font-weight: bold; }
.wells { border-top: 1px solid #d4d3d1; padding: 6px 4px 0 3px; }
.w-label { padding-left: 6px; }
.well { display: block; width: 100%; height: 22px; margin: 4px 0 7px; padding: 0 2px 0 5px; background: #fff; border: 1px dashed #c4c4c4; border-radius: 3px; text-align: left; }
.toggles { padding-top: 3px; }
.toggle { display: flex; align-items: center; height: 21px; padding: 0 4px 0 6px; position: relative; }
.t-name { flex: 1; white-space: nowrap; }
.toggle input { appearance: none; flex: none; margin: 0; width: 25px; height: 13px; border: 1px solid #666; border-radius: 7px; background: radial-gradient(circle at 7px 50%, #555 3px, transparent 4px) #fff; }
.toggle input:checked { border-color: #0f6b50; background: radial-gradient(circle at 17px 50%, #fff 3px, transparent 4px) #0f6b50; }
.t-state { position: absolute; right: 8px; font-size: 6px; line-height: 8px; color: #777; }
input:checked + .t-state { right: 16px; color: #fff; }

.data { flex: none; width: 139px; background: #f2f1f0; }
.data .pane-head { padding: 0 5px 0 6px; }
.data .search { height: 22px; margin: 5px 3px 5px 4px; gap: 5px; padding-left: 5px; border-color: #666; }
.tables { list-style: none; margin: 0; padding: 0 0 0 10px; }
.tables li { display: flex; align-items: center; gap: 4px; height: 19px; white-space: nowrap; }

.status { display: flex; justify-content: space-between; align-items: center; height: 17px; padding: 0 14px 0 3px; border-top: 1px solid #dddcda; }
.zoom { display: flex; align-items: center; gap: 5px; }
.zoom input { appearance: none; width: 76px; height: 9px; margin: 0; background: linear-gradient(#555, #555) center / 100% 1px no-repeat; }
.zoom input::-webkit-slider-thumb { appearance: none; width: 4px; height: 9px; background: #444; }
.zoom span { margin: 0 10px 0 5px; }
```
